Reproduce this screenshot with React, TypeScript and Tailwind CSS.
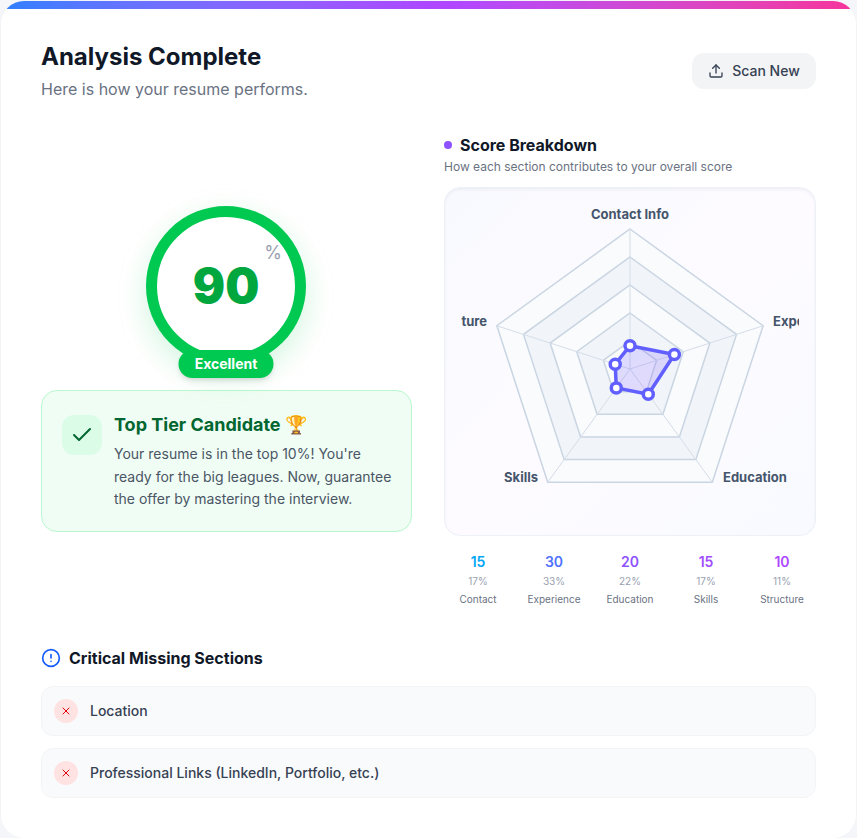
import React from 'react';
import { Check, CircleAlert, Upload, X } from 'lucide-react';

// Radar geometry
const CX = 169;
const CY = 165;
const MAX_R = 140;
const MAX_SCORE = 90;

const point = (index: number, r: number) => {
  const angle = (Math.PI * 2 * index) / 5 - Math.PI / 2;
  return { x: CX + r * Math.cos(angle), y: CY + r * Math.sin(angle) };
};

const polygon = (radii: number[]) =>
  radii
    .map((r, i) => {
      const p = point(i, r);
      return `${p.x},${p.y}`;
    })
    .join(' ');

const stats = [
  { value: 15, percent: '17%', label: 'Contact', color: 'text-sky-500' },
  { value: 30, percent: '33%', label: 'Experience', color: 'text-[#4f72ff]' },
  { value: 20, percent: '22%', label: 'Education', color: 'text-violet-500' },
  { value: 15, percent: '17%', label: 'Skills', color: 'text-[#a24dff]' },
  { value: 10, percent: '11%', label: 'Structure', color: 'text-purple-500' },
];

const missing = ['Location', 'Professional Links (LinkedIn, Portfolio, etc.)'];

const RadarChart: React.FC = () => {
  const rings = [140, 112, 84, 56, 28];
  const radii = stats.map((s) => (s.value / MAX_SCORE) * MAX_R);

  return (
    <svg width="338" height="315" viewBox="0 0 338 315" className="block overflow-hidden">
      <defs>
        <linearGradient id="radarFill" x1="0" y1="0" x2="1" y2="1">
          <stop offset="0%" stopColor="#615fff" stopOpacity="0.2" />
          <stop offset="100%" stopColor="#8e51ff" stopOpacity="0.2" />
        </linearGradient>
      </defs>
      {rings.map((r, i) => (
        <polygon
          key={r}
          points={polygon([r, r, r, r, r])}
          fill={i % 2 === 0 ? '#f9fbfd' : '#f1f5f9'}
          stroke="#cad5e2"
          strokeWidth="1.5"
        />
      ))}
      {[0, 1, 2, 3, 4].map((i) => {
        const p = point(i, MAX_R);
        return <line key={i} x1={CX} y1={CY} x2={p.x} y2={p.y} stroke="#d5dde8" strokeWidth="1" />;
      })}
      <polygon points={polygon(radii)} fill="url(#radarFill)" stroke="#615fff" strokeWidth="3.5" strokeLinejoin="round" />
      {radii.map((r, i) => {
        const p = point(i, r);
        return <circle key={i} cx={p.x} cy={p.y} r="5" fill="#ffffff" stroke="#615fff" strokeWidth="3.5" />;
      })}
      <g className="fill-slate-600 text-[13px] font-bold">
        <text x="169" y="15" textAnchor="middle">Contact Info</text>
        <text x="312" y="122">Experience</text>
        <text x="262" y="278">Education</text>
        <text x="77" y="278" textAnchor="end">Skills</text>
        <text x="26" y="122" textAnchor="end">Structure</text>
      </g>
    </svg>
  );
};

const ScoreRing: React.FC = () => (
  <div className="relative mb-6 ml-[105px] h-40 w-40 rounded-full border-[11px] border-green-500 bg-white shadow-[0_10px_30px_rgba(0,201,80,0.18)]">
    <div className="flex h-full items-center justify-center">
      <span className="text-5xl font-black text-green-600">90</span>
    </div>
    <span className="absolute top-[22px] right-[13px] text-lg leading-7 text-gray-400">%</span>
    <div className="absolute -bottom-[23px] left-1/2 flex h-7 w-[95px] -translate-x-1/2 items-center justify-center rounded-full bg-green-500 text-sm font-bold text-white shadow-md">
      Excellent
    </div>
  </div>
);

const App: React.FC = () => {
  return (
    <div className="min-h-screen bg-[#f5f6f9] font-['Inter',sans-serif]">
      <div className="relative overflow-hidden rounded-3xl border border-gray-100 bg-white p-10">
        <div className="absolute top-0 right-0 left-0 h-2 bg-gradient-to-r from-blue-500 via-purple-500 to-pink-500" />

        {/* Header */}
        <div className="mb-8 flex items-start justify-between">
          <div>
            <h1 className="text-2xl font-bold text-gray-900">Analysis Complete</h1>
            <p className="mt-1 text-base text-gray-500">Here is how your resume performs.</p>
          </div>
          <button className="mt-3 flex h-9 w-[124px] items-center justify-center gap-2 rounded-xl bg-gray-100 text-sm font-medium text-gray-700">
            <Upload size={16} />
            Scan New
          </button>
        </div>

        <div className="grid grid-cols-[371px_1fr] gap-8">
          {/* Score column */}
          <div className="flex flex-col justify-center pb-0.5">
            <ScoreRing />
            <div className="flex gap-3 rounded-2xl border border-green-200 bg-green-50 py-5 pr-4 pl-5">
              <div className="mt-1 flex h-10 w-10 shrink-0 items-center justify-center rounded-xl bg-green-100 text-green-800">
                <Check size={24} />
              </div>
              <div>
                <h3 className="text-lg font-bold text-green-800">Top Tier Candidate 🏆</h3>
                <p className="mt-1 text-sm leading-relaxed text-gray-600">
                  Your resume is in the top 10%! You're ready for the big leagues. Now, guarantee the offer by mastering the interview.
                </p>
              </div>
            </div>
          </div>

          {/* Breakdown column */}
          <div>
            <div className="flex items-center gap-2">
              <span className="h-2 w-2 rounded-full bg-violet-500" />
              <h2 className="text-base font-bold text-gray-900">Score Breakdown</h2>
            </div>
            <p className="mt-0.5 text-xs text-gray-500">How each section contributes to your overall score</p>
            <div className="mt-3 rounded-2xl border border-[#eef0f8] bg-gradient-to-br from-[#f8f9fe] via-[#fdfbff] to-[#f8faff] p-4 shadow-[inset_0_2px_3px_rgba(100,116,139,0.08)]">
              <RadarChart />
            </div>
            <div className="mt-4 grid grid-cols-5 gap-2 text-center">
              {stats.map((s) => (
                <div key={s.label}>
                  <div className={`text-sm font-semibold ${s.color}`}>{s.value}</div>
                  <div className="mt-0.5 text-[10px] leading-[15px] text-gray-400">{s.percent}</div>
                  <div className="mt-[3px] text-[10px] leading-[15px] text-gray-500">{s.label}</div>
                </div>
              ))}
            </div>
          </div>
        </div>

        {/* Missing sections */}
        <div className="mt-[39px]">
          <div className="mb-4 flex items-center gap-2">
            <CircleAlert size={20} className="text-blue-600" />
            <h2 className="text-base font-bold text-gray-900">Critical Missing Sections</h2>
          </div>
          <div className="flex flex-col gap-3">
            {missing.map((item) => (
              <div key={item} className="flex h-[50px] items-center gap-3 rounded-xl border border-gray-100 bg-gray-50 px-3">
                <div className="flex h-6 w-6 items-center justify-center rounded-full bg-red-100 text-red-600">
                  <X size={12} />
                </div>
                <span className="text-sm font-medium text-gray-700">{item}</span>
              </div>
            ))}
          </div>
        </div>
      </div>
    </div>
  );
};

export default App;
